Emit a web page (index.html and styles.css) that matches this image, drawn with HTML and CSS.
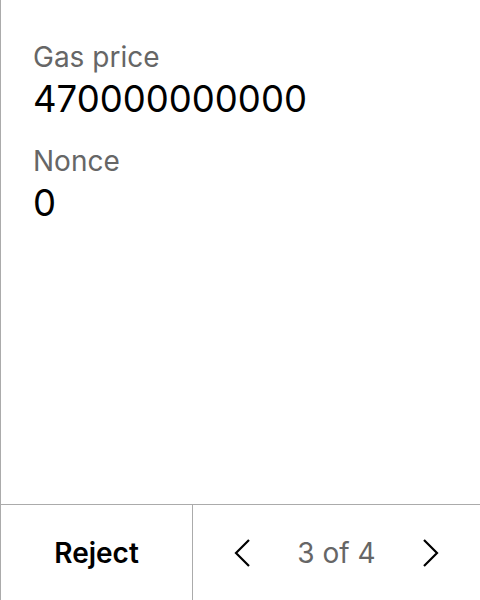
FILE: index.html
```html
<!DOCTYPE html>
<html>
<head>
<meta charset="utf-8">
<link rel="stylesheet" href="styles.css">
</head>
<body>
<div class="screen">
  <main class="content">
    <div class="field">
      <div class="label">Gas price</div>
      <div class="value">470000000000</div>
    </div>
    <div class="field">
      <div class="label">Nonce</div>
      <div class="value">0</div>
    </div>
  </main>
  <footer class="footer">
    <button class="reject">Reject</button>
    <div class="pager">
      <svg class="chev" width="24" height="32" viewBox="0 0 24 32"><path d="M18 3 L5 16 L18 29" fill="none" stroke="#000" stroke-width="2.2"/></svg>
      <span class="count">3 of 4</span>
      <svg class="chev" width="24" height="32" viewBox="0 0 24 32"><path d="M6 3 L19 16 L6 29" fill="none" stroke="#000" stroke-width="2.2"/></svg>
    </div>
  </footer>
</div>
</body>
</html>
```

FILE: styles.css
```css
html, body {
  margin: 0;
  padding: 0;
  background: #fff;
}
body {
  font-family: Inter, "Noto Sans", sans-serif;
}
.screen {
  width: 480px;
  height: 600px;
  box-sizing: border-box;
  border-left: 1px solid #ababab;
  display: flex;
  flex-direction: column;
}
.content {
  flex: 1;
  padding: 40px 32px 0 32px;
  display: flex;
  flex-direction: column;
  gap: 23px;
}
.label {
  font-size: 28px;
  line-height: 34px;
  color: #666;
}
.value {
  font-size: 36.5px;
  line-height: 44px;
  margin-top: 3px;
  color: #000;
}
.footer {
  height: 96px;
  box-sizing: border-box;
  border-top: 1px solid #ababab;
  display: flex;
}
.reject {
  width: 192px;
  border: none;
  border-right: 1px solid #ababab;
  background: none;
  font-family: Inter, "Noto Sans", sans-serif;
  font-size: 28px;
  font-weight: 600;
  color: #000;
  padding: 0;
}
.pager {
  flex: 1;
  display: flex;
  align-items: center;
  justify-content: space-between;
  padding: 0 38px;
}
.count {
  font-size: 28px;
  color: #666;
}
.chev {
  display: block;
}
```
